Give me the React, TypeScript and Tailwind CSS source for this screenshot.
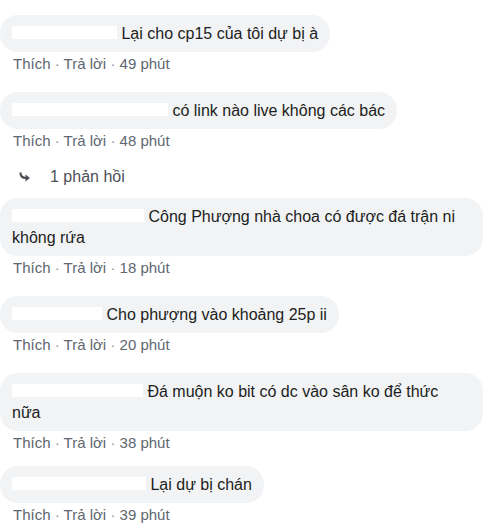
import React from 'react'

interface Comment {
  nameW: number
  lines: string[]
  time: string
  replies?: number
  tight?: boolean
}

const comments: Comment[] = [
  { nameW: 105, lines: ['Lại cho cp15 của tôi dự bị à'], time: '49 phút' },
  { nameW: 156, lines: ['có link nào live không các bác'], time: '48 phút', replies: 1 },
  { nameW: 132, lines: ['Công Phượng nhà choa có được đá trận ni', 'không rứa'], time: '18 phút' },
  { nameW: 90, lines: ['Cho phượng vào khoảng 25p ii'], time: '20 phút' },
  { nameW: 131, lines: ['Đá muộn ko bit có dc vào sân ko để thức', 'nữa'], time: '38 phút', tight: true },
  { nameW: 134, lines: ['Lại dự bị chán'], time: '39 phút' },
]

function ReplyArrow() {
  return (
    <svg width="12" height="10" viewBox="0 0 12 10" className="text-[#4b4f56]">
      <path d="M1.5 0.5 C1.5 4.5 3 6 7 6" fill="none" stroke="currentColor" strokeWidth="2.2" />
      <path d="M6.5 2.5 L11 6 L6.5 9.5 Z" fill="currentColor" />
    </svg>
  )
}

function CommentRow({ c }: { c: Comment }) {
  const wide = c.lines.length > 1
  return (
    <div className={c.tight ? 'mb-[15px]' : 'mb-[20px]'}>
      <div
        className={
          wide
            ? 'w-[483px] rounded-[18px] bg-[#f2f3f5] px-3 py-2 text-[16px] leading-[21px] text-[#1c1e21]'
            : 'inline-block rounded-[18px] bg-[#f2f3f5] px-3 py-2 text-[16px] leading-[21px] text-[#1c1e21]'
        }
      >
        <span className="inline-block h-[13px] bg-white align-baseline" style={{ width: c.nameW }} />
        {' '}
        {c.lines[0]}
        {c.lines.slice(1).map((l, i) => (
          <React.Fragment key={i}>
            <br />
            {l}
          </React.Fragment>
        ))}
      </div>
      <div className="mt-[4px] pl-[13px] text-[15px] leading-[16px] text-[#606770]">
        Thích <span className="text-[#90949c]">·</span> Trả lời <span className="text-[#90949c]">·</span> {c.time}
      </div>
      {c.replies && (
        <div className="mt-[20px] -mb-[7px] flex items-center pl-[19px] text-[16px] leading-[16px] text-[#4b4f56]">
          <ReplyArrow />
          <span className="ml-[19px]">{c.replies} phản hồi</span>
        </div>
      )}
    </div>
  )
}

export default function App() {
  return (
    <div className="h-[530px] w-[499px] overflow-hidden bg-white pt-[15px] font-['Liberation_Sans',Arial,sans-serif]">
      {comments.map((c, i) => (
        <CommentRow key={i} c={c} />
      ))}
    </div>
  )
}
